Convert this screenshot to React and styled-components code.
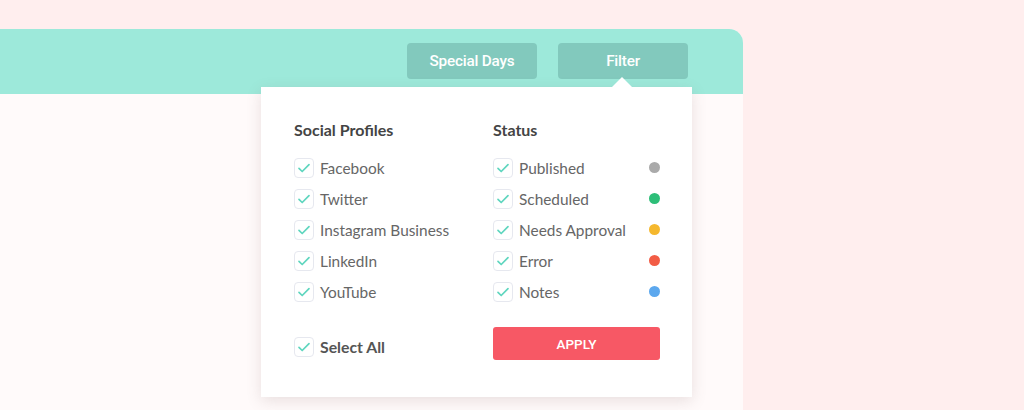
import React from 'react'
import styled, { createGlobalStyle } from 'styled-components'

const Global = createGlobalStyle`
  body {
    margin: 0;
    background: #ffeeee;
    font-family: Lato, "Open Sans", sans-serif;
  }
`

const Page = styled.div`
  height: 410px;
  padding-top: 29px;
  box-sizing: border-box;
  overflow: hidden;
`

const Card = styled.div`
  width: 743px;
  height: 400px;
  background: #fffafa;
  border-top-right-radius: 14px;
`

const Header = styled.div`
  height: 65px;
  background: #9de9da;
  border-top-right-radius: 14px;
  display: flex;
  justify-content: flex-end;
  align-items: flex-start;
  gap: 21px;
  padding: 14px 55px 0 0;
  box-sizing: border-box;
`

const HeaderBtn = styled.button`
  width: 130px;
  height: 36px;
  background: #82c9bd;
  border: none;
  border-radius: 4px;
  color: #ffffff;
  font-family: Roboto, sans-serif;
  font-weight: 500;
  font-size: 15.3px;
  letter-spacing: -0.2px;
  cursor: pointer;
`

const FilterWrap = styled.div`
  position: relative;
`

const Dropdown = styled.div`
  position: absolute;
  top: 44px;
  right: -4px;
  width: 431px;
  height: 310px;
  background: #ffffff;
  box-shadow: 0 4px 14px rgba(120, 90, 90, 0.16);
  padding: 33px 32px 0 33px;
  box-sizing: border-box;
  display: grid;
  grid-template-columns: 199px 167px;
  z-index: 2;

  &::before {
    content: '';
    position: absolute;
    top: -10px;
    right: 60px;
    border-left: 10px solid transparent;
    border-right: 10px solid transparent;
    border-bottom: 10px solid #ffffff;
  }
`

const Column = styled.div`
  display: flex;
  flex-direction: column;
`

const Title = styled.div`
  font-weight: 700;
  font-size: 16px;
  line-height: 20px;
  color: #444;
  margin-bottom: 12px;
`

const Row = styled.label`
  height: 31px;
  display: flex;
  align-items: center;
  justify-content: space-between;
`

const Left = styled.span`
  display: flex;
  align-items: center;
  gap: 6px;
  font-size: ${p => (p.$bold ? '15.8px' : '15.4px')};
  line-height: 20px;
  color: ${p => (p.$bold ? '#555' : '#666')};
  font-weight: ${p => (p.$bold ? 700 : 400)};
`

const Box = styled.span`
  width: 20px;
  height: 20px;
  box-sizing: border-box;
  border: 1px solid #e6e8ef;
  border-radius: 4px;
  display: flex;
  align-items: center;
  justify-content: center;
`

const Dot = styled.span`
  width: 11px;
  height: 11px;
  border-radius: 50%;
  background: ${p => p.$color};
`

const Footer = styled.div`
  margin-top: 20px;
  height: 33px;
  display: flex;
  align-items: center;
`

const SelectAll = styled(Row)`
  margin-top: 7px;
`

const Apply = styled.button`
  width: 167px;
  height: 33px;
  background: #f75865;
  border: none;
  border-radius: 3px;
  color: #fff;
  font-family: Roboto, sans-serif;
  font-weight: 500;
  font-size: 13.5px;
  cursor: pointer;
`

function Check() {
  return (
    <Box>
      <svg width="14" height="14" viewBox="0 0 14 14" fill="none">
        <path d="M2 7.4l3.2 3.1L12 3.6" stroke="#5fd6bf" strokeWidth="1.7" strokeLinecap="round" strokeLinejoin="round" />
      </svg>
    </Box>
  )
}

const profiles = ['Facebook', 'Twitter', 'Instagram Business', 'LinkedIn', 'YouTube']
const statuses = [
  ['Published', '#aaaaaa'],
  ['Scheduled', '#2dbe78'],
  ['Needs Approval', '#f5b82e'],
  ['Error', '#f25c45'],
  ['Notes', '#5ca8ee'],
]

export default function App() {
  return (
    <Page>
      <Global />
      <Card>
        <Header>
          <HeaderBtn>Special Days</HeaderBtn>
          <FilterWrap>
            <HeaderBtn>Filter</HeaderBtn>
            <Dropdown>
              <Column>
                <Title>Social Profiles</Title>
                {profiles.map(p => (
                  <Row key={p}>
                    <Left><Check />{p}</Left>
                  </Row>
                ))}
                <Footer>
                  <SelectAll>
                    <Left $bold><Check />Select All</Left>
                  </SelectAll>
                </Footer>
              </Column>
              <Column>
                <Title>Status</Title>
                {statuses.map(([s, c]) => (
                  <Row key={s}>
                    <Left><Check />{s}</Left>
                    <Dot $color={c} />
                  </Row>
                ))}
                <Footer>
                  <Apply>APPLY</Apply>
                </Footer>
              </Column>
            </Dropdown>
          </FilterWrap>
        </Header>
      </Card>
    </Page>
  )
}
